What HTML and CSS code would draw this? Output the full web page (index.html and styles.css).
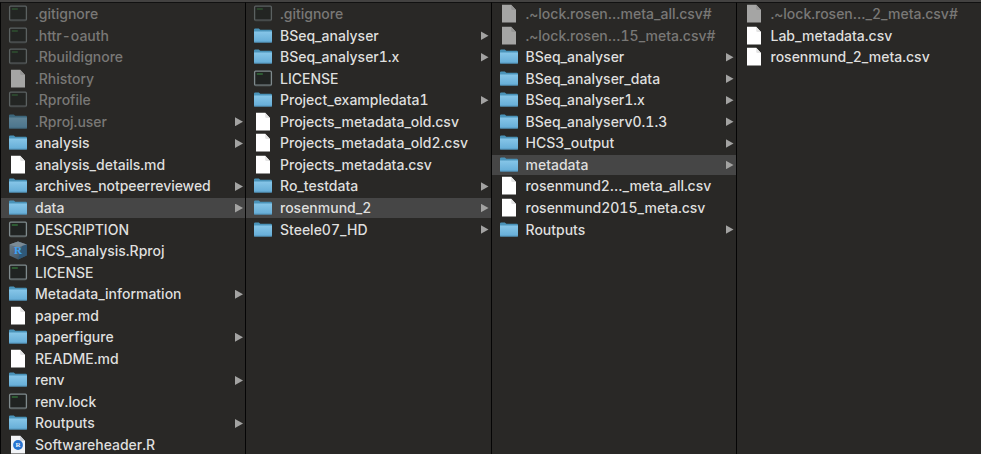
FILE: index.html
```html
<!DOCTYPE html>
<html lang="en">
<head>
<meta charset="utf-8">
<title>Column browser</title>
<link rel="stylesheet" href="styles.css">
</head>
<body>
<svg class="defs" width="0" height="0">
  <defs>
    <linearGradient id="blue" x1="0" y1="0" x2="0" y2="1"><stop offset="0" stop-color="#87c6e8"/><stop offset="1" stop-color="#64acd6"/></linearGradient>
    <linearGradient id="hex" x1="0" y1="0" x2="1" y2="1"><stop offset="0" stop-color="#72818d"/><stop offset="1" stop-color="#314a5e"/></linearGradient>
    <symbol id="folder" viewBox="0 0 20 20"><path d="M1 3.600q0-1.200 1.200-1.200h3.600l1.500 1.400h10.500q1.200 0 1.200 1.200v3H1z" fill="#4a93b9"/><path d="M1 5.400h18v10.400q0 .8-.8.8H1.800q-.8 0-.8-.8z" fill="url(#blue)"/><path d="M1 16.200h18" stroke="#4b88aa" stroke-width=".8"/></symbol>
    <symbol id="doc" viewBox="0 0 20 20"><path d="M3 .8h9.200L17 6v12.600H3z" fill="#fff"/><path d="M12.200.8v3.600q0 1.600 1.400 1.600H17z" fill="#e4e4e4"/></symbol>
    <symbol id="term" viewBox="0 0 20 20"><rect x="1.600" y="2.200" width="16.800" height="14" rx="1" fill="#202322" stroke="#7f8a8d" stroke-width="1.300"/><path d="M2.500 16.900h15" stroke="#51595b" stroke-width=".8"/><path d="M3.800 5h6" stroke="#37803f" stroke-width="1.200"/></symbol>
    <symbol id="rproj" viewBox="0 0 20 20"><path d="M10 .6l8.800 3v11L10 18.600l-8.500-4v-11z" fill="url(#hex)"/><path d="M10 .6l8.800 3-8.800 3-8.500-3z" fill="#7b8b96"/><path d="M14 5.100l4.800-1.500v11L10 18.600z" fill="#2f5878"/><text x="10" y="13" class="r-big">R</text></symbol>
    <symbol id="rdoc" viewBox="0 0 20 20"><path d="M3 .8h9.200L17 6v12.600H3z" fill="#f1f3f6"/><path d="M12.200.8V6H17z" fill="#ccd0d5"/><circle cx="10" cy="10" r="4.900" fill="#2673cf"/><text x="10" y="12.300" class="r-small">R</text></symbol>
  </defs>
</svg>
<main class="browser">
  <ul class="column first">
    <li class="row dim"><svg class="icon"><use href="#term"/></svg><span>.gitignore</span></li>
    <li class="row dim"><svg class="icon"><use href="#term"/></svg><span>.httr-oauth</span></li>
    <li class="row dim"><svg class="icon"><use href="#term"/></svg><span>.Rbuildignore</span></li>
    <li class="row dim"><svg class="icon"><use href="#doc"/></svg><span>.Rhistory</span></li>
    <li class="row dim"><svg class="icon"><use href="#term"/></svg><span>.Rprofile</span></li>
    <li class="row dim parent"><svg class="icon"><use href="#folder"/></svg><span>.Rproj.user</span></li>
    <li class="row parent"><svg class="icon"><use href="#folder"/></svg><span>analysis</span></li>
    <li class="row"><svg class="icon"><use href="#doc"/></svg><span>analysis_details.md</span></li>
    <li class="row parent"><svg class="icon"><use href="#folder"/></svg><span class="tight">archives_notpeerreviewed</span></li>
    <li class="row parent selected"><svg class="icon"><use href="#folder"/></svg><span>data</span></li>
    <li class="row"><svg class="icon"><use href="#term"/></svg><span>DESCRIPTION</span></li>
    <li class="row"><svg class="icon"><use href="#rproj"/></svg><span>HCS_analysis.Rproj</span></li>
    <li class="row"><svg class="icon"><use href="#term"/></svg><span>LICENSE</span></li>
    <li class="row parent"><svg class="icon"><use href="#folder"/></svg><span>Metadata_information</span></li>
    <li class="row"><svg class="icon"><use href="#doc"/></svg><span>paper.md</span></li>
    <li class="row parent"><svg class="icon"><use href="#folder"/></svg><span>paperfigure</span></li>
    <li class="row"><svg class="icon"><use href="#doc"/></svg><span>README.md</span></li>
    <li class="row parent"><svg class="icon"><use href="#folder"/></svg><span>renv</span></li>
    <li class="row"><svg class="icon"><use href="#term"/></svg><span>renv.lock</span></li>
    <li class="row parent"><svg class="icon"><use href="#folder"/></svg><span>Routputs</span></li>
    <li class="row"><svg class="icon"><use href="#rdoc"/></svg><span>Softwareheader.R</span></li>
  </ul>
  <ul class="column second">
    <li class="row dim"><svg class="icon"><use href="#term"/></svg><span>.gitignore</span></li>
    <li class="row parent"><svg class="icon"><use href="#folder"/></svg><span>BSeq_analyser</span></li>
    <li class="row parent"><svg class="icon"><use href="#folder"/></svg><span>BSeq_analyser1.x</span></li>
    <li class="row"><svg class="icon"><use href="#term"/></svg><span>LICENSE</span></li>
    <li class="row parent"><svg class="icon"><use href="#folder"/></svg><span>Project_exampledata1</span></li>
    <li class="row"><svg class="icon"><use href="#doc"/></svg><span>Projects_metadata_old.csv</span></li>
    <li class="row"><svg class="icon"><use href="#doc"/></svg><span>Projects_metadata_old2.csv</span></li>
    <li class="row"><svg class="icon"><use href="#doc"/></svg><span>Projects_metadata.csv</span></li>
    <li class="row parent"><svg class="icon"><use href="#folder"/></svg><span>Ro_testdata</span></li>
    <li class="row parent selected"><svg class="icon"><use href="#folder"/></svg><span>rosenmund_2</span></li>
    <li class="row parent"><svg class="icon"><use href="#folder"/></svg><span>Steele07_HD</span></li>
  </ul>
  <ul class="column">
    <li class="row dim"><svg class="icon"><use href="#doc"/></svg><span>.~lock.rosen…meta_all.csv#</span></li>
    <li class="row dim"><svg class="icon"><use href="#doc"/></svg><span>.~lock.rosen…15_meta.csv#</span></li>
    <li class="row parent"><svg class="icon"><use href="#folder"/></svg><span>BSeq_analyser</span></li>
    <li class="row parent"><svg class="icon"><use href="#folder"/></svg><span>BSeq_analyser_data</span></li>
    <li class="row parent"><svg class="icon"><use href="#folder"/></svg><span>BSeq_analyser1.x</span></li>
    <li class="row parent"><svg class="icon"><use href="#folder"/></svg><span>BSeq_analyserv0.1.3</span></li>
    <li class="row parent"><svg class="icon"><use href="#folder"/></svg><span>HCS3_output</span></li>
    <li class="row parent selected"><svg class="icon"><use href="#folder"/></svg><span>metadata</span></li>
    <li class="row"><svg class="icon"><use href="#doc"/></svg><span class="tight">rosenmund2…_meta_all.csv</span></li>
    <li class="row"><svg class="icon"><use href="#doc"/></svg><span>rosenmund2015_meta.csv</span></li>
    <li class="row parent"><svg class="icon"><use href="#folder"/></svg><span>Routputs</span></li>
  </ul>
  <ul class="column">
    <li class="row dim"><svg class="icon"><use href="#doc"/></svg><span>.~lock.rosen…_2_meta.csv#</span></li>
    <li class="row"><svg class="icon"><use href="#doc"/></svg><span>Lab_metadata.csv</span></li>
    <li class="row"><svg class="icon"><use href="#doc"/></svg><span>rosenmund_2_meta.csv</span></li>
  </ul>
</main>
</body>
</html>
```
FILE: styles.css
```css
* { box-sizing: border-box; }
body {
  margin: 0;
  height: 454px;
  overflow: hidden;
  background: #292826;
  color: #dfdfde;
  font: 500 14px/20px Inter, "Liberation Sans", sans-serif;
  font-variant-numeric: tabular-nums;
}
.defs { position: absolute; }
.browser {
  display: grid;
  grid-template-columns: 245px 246px 245px 245px;
  height: 454px;
  border-top: 2px solid #434241;
}
.column {
  margin: 0;
  padding: 1.1px 0 0;
  list-style: none;
  border-left: 1px solid #050505;
  border-top: 1px solid #111;
  min-width: 0;
}
.row {
  display: flex;
  align-items: center;
  height: 20px;
  margin-bottom: 1.55px;
  padding: 0 2.5px 0 6.5px;
  white-space: nowrap;
}
.first .row { padding: 0 2px 0 7px; }
.second .row { padding-left: 7px; }
.icon { flex: none; width: 20px; height: 20px; margin-right: 7px; }
.row.dim span { color: #797876; }
.row.dim .icon { opacity: .58; }
.tight { letter-spacing: -.05px; }
.selected { background: #464646; }
.parent::after {
  content: "";
  margin-left: auto;
  width: 8px;
  height: 9px;
  background: #a3a3a2;
  clip-path: polygon(0 0, 100% 50%, 0 100%);
}
.r-big { font: 700 11px "Liberation Serif", serif; fill: #3da1f4; text-anchor: middle; }
.r-small { font: 700 7px "Liberation Serif", serif; fill: #e8f2ff; text-anchor: middle; }
```
